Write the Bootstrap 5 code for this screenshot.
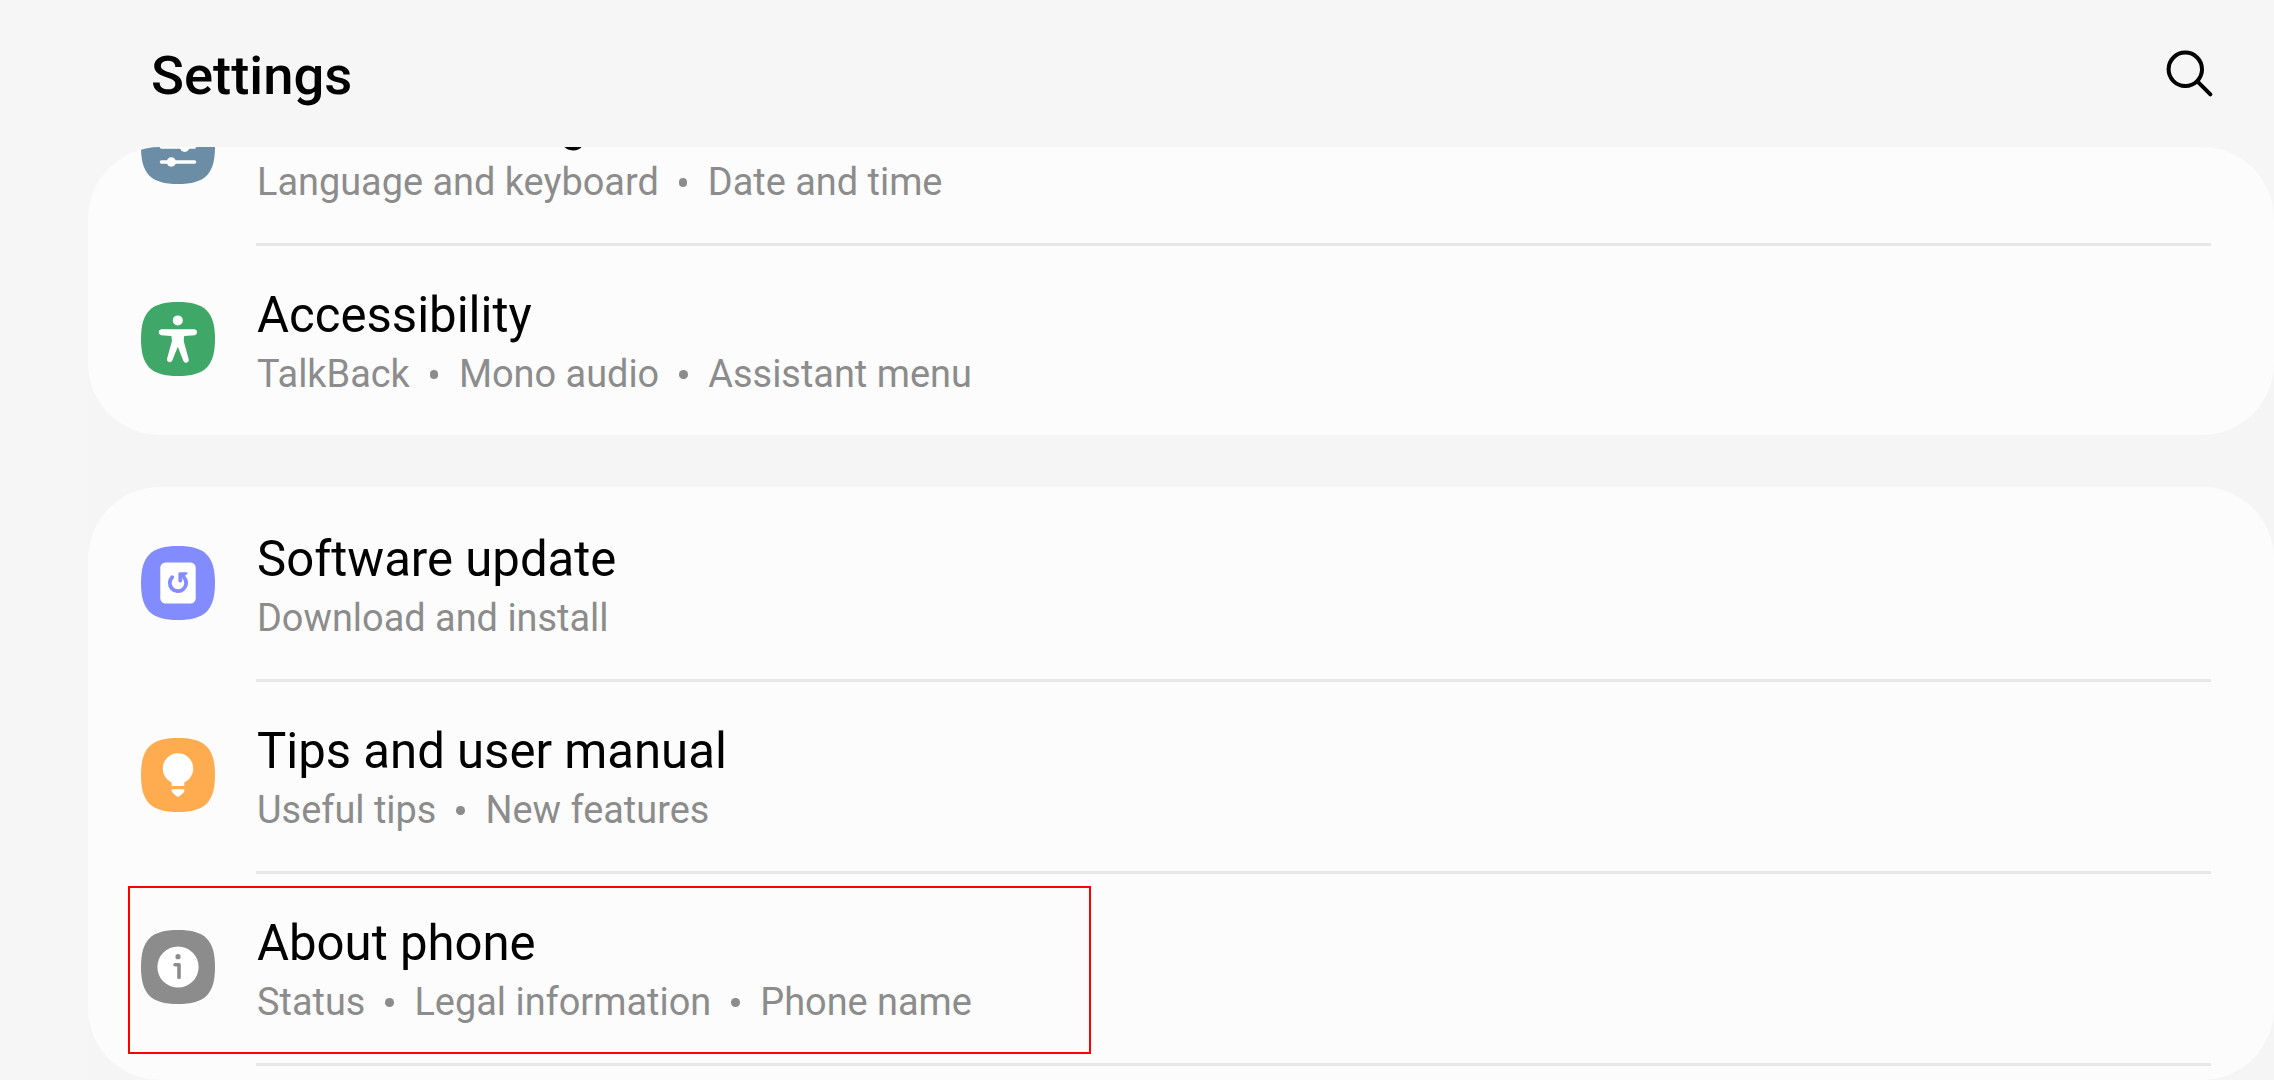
<!DOCTYPE html>
<html lang="en">
<head>
<meta charset="utf-8">
<meta name="viewport" content="width=device-width, initial-scale=1">
<title>Settings</title>
<link href="https://cdn.jsdelivr.net/npm/bootstrap@5.3.0/dist/css/bootstrap.min.css" rel="stylesheet">
<style>
body { height: 1080px; background: #f6f6f6; color: #000; font-family: Roboto, sans-serif; }
.app-head { height: 147px; padding: 0 60px 0 151px; }
.app-title { font-size: 54.4px; font-weight: 500; line-height: 64px; margin-top: 4px; }
.search-btn { margin-top: 3px; }
.pane { margin-left: 88px; border-radius: 72px 72px 0 0; background: #f5f5f5; }
.pane-scroll { margin-top: -93px; }
.group { background: #fcfcfc; border: 0; border-radius: 72px; }
.group + .group { margin-top: 52px; padding: 3px 0 14px; }
.item { height: 192px; padding-left: 53px; padding-right: 63px; }
.item-last { height: 189px; }
.item-icon { width: 74px; height: 74px; margin-top: 56px; }
.item-body { margin-left: 41px; padding: 40px 0 0 1px; border-bottom: 3px solid #e7e7e7; }
.item-last .item-body { border-bottom: 0; }
.item-title { font-size: 49.1px; line-height: 58px; }
.item-sub { font-size: 37.9px; line-height: 60px; color: #8c8c8c; }
.dot { width: 8.6px; height: 8.6px; border-radius: 50%; background: #8c8c8c; margin: 1px 20.5px 0 20px; }
.marker { left: 40px; top: 12px; width: 963px; height: 168px; border: 2px solid #f00; }
</style>
</head>
<body class="d-flex flex-column overflow-hidden">
<header class="app-head d-flex align-items-center justify-content-between flex-shrink-0">
  <h1 class="app-title mb-0">Settings</h1>
  <svg class="search-btn" width="50" height="50" viewBox="0 0 50 50" fill="none" stroke="#000" stroke-width="4" stroke-linecap="round"><circle cx="21.3" cy="19.3" r="16.7"/><path d="M33.6 31.6L46.4 44.4"/></svg>
</header>
<main class="pane flex-grow-1 overflow-hidden">
  <div class="pane-scroll">
    <section class="group card">
      <div class="item d-flex">
        <svg class="item-icon flex-shrink-0" viewBox="0 0 74 74"><path fill="#6b8ea6" d="M37 0C64 0 74 10 74 37S64 74 37 74 0 64 0 37 10 0 37 0Z"/><g stroke="#fff" stroke-width="3.6" stroke-linecap="round"><path d="M20.5 22H53.5M20.5 37H53.5M20.5 52H53.5"/></g><g fill="#fff"><circle cx="30.3" cy="22" r="4.7"/><circle cx="43.7" cy="37.3" r="4.7"/><circle cx="30.3" cy="52" r="4.7"/></g></svg>
        <div class="item-body flex-grow-1">
          <div class="item-title">General management</div>
          <div class="item-sub d-flex align-items-center"><span>Language and keyboard</span><i class="dot"></i><span>Date and time</span></div>
        </div>
      </div>
      <div class="item item-last d-flex">
        <svg class="item-icon flex-shrink-0" viewBox="0 0 74 74"><path fill="#3fa768" d="M37 0C64 0 74 10 74 37S64 74 37 74 0 64 0 37 10 0 37 0Z"/><g fill="#fff"><circle cx="36.8" cy="18.4" r="5"/><path d="M20.2 27.3H53.6A3 3 0 0 1 53.6 33.2L43.2 33.9 42.7 39 47.6 57A2.8 2.8 0 0 1 42.3 58.8L36.8 44.7 31.2 58.8A2.8 2.8 0 0 1 26 57L30.9 39 30.4 33.9 20.2 33.2A3 3 0 0 1 20.2 27.3Z"/></g></svg>
        <div class="item-body flex-grow-1">
          <div class="item-title">Accessibility</div>
          <div class="item-sub d-flex align-items-center"><span>TalkBack</span><i class="dot"></i><span>Mono audio</span><i class="dot"></i><span>Assistant menu</span></div>
        </div>
      </div>
    </section>
    <section class="group card">
      <div class="item d-flex">
        <svg class="item-icon flex-shrink-0" viewBox="0 0 74 74"><path fill="#838cff" d="M37 0C64 0 74 10 74 37S64 74 37 74 0 64 0 37 10 0 37 0Z"/><rect x="19.3" y="16.4" width="35.4" height="41" rx="5.2" fill="#fff"/><path d="M31.2 31.2A8.2 8.2 0 1 0 43.3 31.8" fill="none" stroke="#838cff" stroke-width="3.8" stroke-linecap="round"/><path fill="#838cff" d="M37.4 27.4Q37.4 26.2 38.6 26.2H45.8C46.9 26.2 47 27.4 46.2 28L41.2 32V34.6A1.9 1.9 0 0 1 37.4 34.6Z"/></svg>
        <div class="item-body flex-grow-1">
          <div class="item-title">Software update</div>
          <div class="item-sub">Download and install</div>
        </div>
      </div>
      <div class="item d-flex">
        <svg class="item-icon flex-shrink-0" viewBox="0 0 74 74"><path fill="#ffac51" d="M37 0C64 0 74 10 74 37S64 74 37 74 0 64 0 37 10 0 37 0Z"/><g fill="#fff"><circle cx="37" cy="30.4" r="15.2"/><path d="M30.7 42H43.3V48H30.7ZM30.7 51.3H43.3V53Q43.3 54 42.4 54.7L38.4 58.2Q37 59.3 35.6 58.2L31.6 54.7Q30.7 54 30.7 53Z"/></g></svg>
        <div class="item-body flex-grow-1">
          <div class="item-title">Tips and user manual</div>
          <div class="item-sub d-flex align-items-center"><span>Useful tips</span><i class="dot"></i><span>New features</span></div>
        </div>
      </div>
      <div class="item d-flex position-relative">
        <svg class="item-icon flex-shrink-0" viewBox="0 0 74 74"><path fill="#8c8c8c" d="M37 0C64 0 74 10 74 37S64 74 37 74 0 64 0 37 10 0 37 0Z"/><circle cx="37" cy="37" r="20.6" fill="#fff"/><circle cx="37" cy="26.7" r="2.6" fill="#8c8c8c"/><path d="M34 34.8H38V47.4" fill="none" stroke="#8c8c8c" stroke-width="3.6" stroke-linecap="round" stroke-linejoin="round"/></svg>
        <div class="item-body flex-grow-1">
          <div class="item-title">About phone</div>
          <div class="item-sub d-flex align-items-center"><span>Status</span><i class="dot"></i><span>Legal information</span><i class="dot"></i><span>Phone name</span></div>
        </div>
        <div class="marker position-absolute"></div>
      </div>
    </section>
  </div>
</main>
<script src="https://cdn.jsdelivr.net/npm/bootstrap@5.3.0/dist/js/bootstrap.bundle.min.js"></script>
</body>
</html>
